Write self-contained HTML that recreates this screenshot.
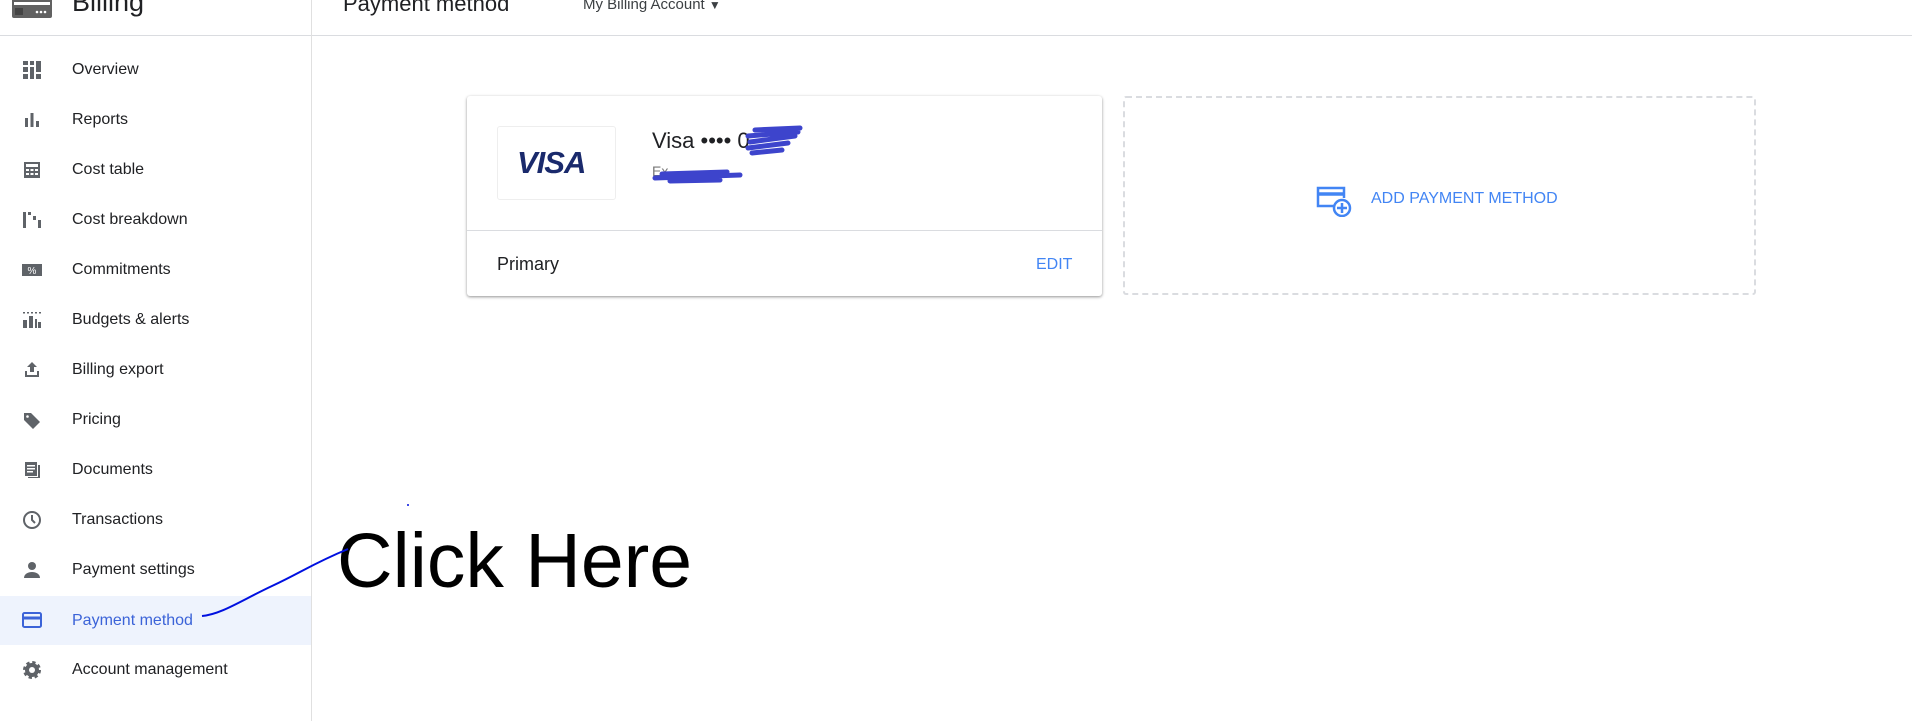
<!DOCTYPE html>
<html><head><meta charset="utf-8"><style>
*{margin:0;padding:0;box-sizing:border-box}
body{width:1912px;height:721px;overflow:hidden;background:#fff;font-family:"Liberation Sans",Arial,sans-serif;color:#202124;position:relative}
.abs{position:absolute}
.hdr{left:0;top:0;width:1912px;height:36px;border-bottom:1px solid #dadce0}
.vl{left:311px;top:0;width:1px;height:721px;background:#e0e0e0}
.nav{left:0;width:311px;height:50px;display:flex;align-items:center}
.nav .ic{position:absolute;left:22px;top:15px;width:20px;height:20px}
.nav span{position:absolute;left:72px;font-size:16px;color:#202124}
.act{background:#eef3fd}
.act span{color:#3b63d8!important}
</style></head><body>
<div class="abs hdr"></div>
<div class="abs vl"></div>
<svg class="abs" style="left:12px;top:-2px" width="40" height="22"><rect x="0" y="0" width="40" height="20" rx="2" fill="#616161"/><rect x="2" y="4" width="36" height="3" fill="#fff"/><rect x="3" y="10" width="8" height="7" fill="#444"/><circle cx="25" cy="14" r="1.3" fill="#fff"/><circle cx="29" cy="14" r="1.3" fill="#fff"/><circle cx="33" cy="14" r="1.3" fill="#fff"/></svg>
<div class="abs" style="left:72px;top:-13px;font-size:27px;color:#202124">Billing</div>
<div class="abs" style="left:343px;top:-9px;font-size:22px;color:#202124">Payment method</div>
<div class="abs" style="left:583px;top:-4px;font-size:15px;color:#3c4043">My Billing Account <span style="font-size:12px">▼</span></div>

<div class="abs nav" style="top:45px"><svg class="ic" viewBox="0 0 20 20" fill="#5f6368"><rect x="1" y="1" width="5" height="4"/><rect x="1" y="7" width="5" height="5"/><rect x="1" y="14" width="5" height="5"/><rect x="8" y="1" width="4" height="4"/><rect x="8" y="7" width="4" height="12"/><rect x="14" y="1" width="5" height="11"/><rect x="14" y="14" width="5" height="5"/></svg><span>Overview</span></div>
<div class="abs nav" style="top:95px"><svg class="ic" viewBox="0 0 20 20" fill="#5f6368"><rect x="3" y="8" width="3" height="9"/><rect x="8.5" y="3" width="3" height="14"/><rect x="14" y="11" width="3" height="6"/></svg><span>Reports</span></div>
<div class="abs nav" style="top:145px"><svg class="ic" viewBox="0 0 20 20"><rect x="2" y="2" width="16" height="16" fill="#5f6368"/><rect x="4" y="4" width="12" height="3" fill="#fff"/><g fill="#fff"><rect x="4" y="9" width="3" height="2"/><rect x="8.5" y="9" width="3" height="2"/><rect x="13" y="9" width="3" height="2"/><rect x="4" y="13" width="3" height="2"/><rect x="8.5" y="13" width="3" height="2"/><rect x="13" y="13" width="3" height="2"/></g></svg><span>Cost table</span></div>
<div class="abs nav" style="top:195px"><svg class="ic" viewBox="0 0 20 20" fill="#5f6368"><rect x="1" y="2" width="3" height="16"/><rect x="6" y="2" width="3" height="3"/><rect x="11" y="6" width="3" height="4"/><rect x="16" y="10" width="3" height="8"/></svg><span>Cost breakdown</span></div>
<div class="abs nav" style="top:245px"><svg class="ic" viewBox="0 0 20 20"><rect x="0" y="4" width="20" height="12" fill="#5f6368"/><text x="10" y="14" font-size="10" fill="#fff" text-anchor="middle" font-family="Liberation Sans">%</text></svg><span>Commitments</span></div>
<div class="abs nav" style="top:295px"><svg class="ic" viewBox="0 0 20 20" fill="#5f6368"><g><rect x="1" y="2" width="2" height="1.5"/><rect x="5" y="2" width="2" height="1.5"/><rect x="9" y="2" width="2" height="1.5"/><rect x="13" y="2" width="2" height="1.5"/><rect x="17" y="2" width="2" height="1.5"/></g><rect x="1" y="10" width="4" height="8"/><rect x="7" y="6" width="4" height="12"/><rect x="13" y="9" width="2" height="9"/><rect x="16" y="12" width="3" height="6"/></svg><span>Budgets &amp; alerts</span></div>
<div class="abs nav" style="top:345px"><svg class="ic" viewBox="0 0 20 20" fill="#5f6368"><path d="M10 2l5 5h-3v5H8V7H5z"/><path d="M3 11h2v4h10v-4h2v6H3z"/></svg><span>Billing export</span></div>
<div class="abs nav" style="top:395px"><svg class="ic" viewBox="0 0 20 20" fill="#5f6368"><path d="M2 3h7l9 9-7 7-9-9z"/><circle cx="5.5" cy="6.5" r="1.3" fill="#fff"/></svg><span>Pricing</span></div>
<div class="abs nav" style="top:445px"><svg class="ic" viewBox="0 0 20 20" fill="#5f6368"><path d="M3 2h12v14H3z"/><path d="M16 5h2v13H6v-1h10z"/><g fill="#fff"><rect x="5" y="5" width="8" height="1.5"/><rect x="5" y="8" width="8" height="1.5"/><rect x="5" y="11" width="6" height="1.5"/></g></svg><span>Documents</span></div>
<div class="abs nav" style="top:495px"><svg class="ic" viewBox="0 0 20 20" fill="none" stroke="#5f6368" stroke-width="2"><circle cx="10" cy="10" r="8"/><path d="M10 5v5l3 3"/></svg><span>Transactions</span></div>
<div class="abs nav" style="top:545px"><svg class="ic" viewBox="0 0 20 20" fill="#5f6368"><circle cx="10" cy="6" r="4"/><path d="M2 18c0-4 4-6 8-6s8 2 8 6z"/></svg><span>Payment settings</span></div>
<div class="abs nav act" style="top:596px;height:49px"><svg class="ic" style="top:14px" viewBox="0 0 20 20" fill="none" stroke="#3b63d8" stroke-width="2"><rect x="1" y="3" width="18" height="14" rx="1.5"/><path d="M1 8h18" stroke-width="3"/></svg><span>Payment method</span></div>
<div class="abs nav" style="top:645px"><svg class="ic" viewBox="0 0 20 20"><circle cx="10" cy="10" r="7" fill="#5f6368" stroke="#5f6368" stroke-width="4" stroke-dasharray="3 2.5"/><circle cx="10" cy="10" r="3" fill="#fff"/></svg><span>Account management</span></div>

<!-- card -->
<div class="abs" style="left:467px;top:96px;width:635px;height:200px;background:#fff;border-radius:3px;box-shadow:0 1px 3px rgba(0,0,0,.3),0 1px 2px rgba(0,0,0,.15)"></div>
<div class="abs" style="left:467px;top:230px;width:635px;height:1px;background:#dadce0"></div>
<div class="abs" style="left:497px;top:126px;width:119px;height:74px;border:1px solid #eee;border-radius:3px"></div>
<div class="abs" style="left:517px;top:145px;font-size:31px;font-weight:bold;font-style:italic;color:#1a2a6c;letter-spacing:-1px">VISA</div>
<div class="abs" style="left:652px;top:128px;font-size:22px;color:#202124">Visa •••• 0</div>
<div class="abs" style="left:652px;top:163px;font-size:14px;color:#777">Ex</div>
<svg class="abs" style="left:650px;top:120px" width="170" height="70"><g stroke="#3d44cc" stroke-linecap="round" fill="none"><path d="M105 10l45-2M98 16l50-4M100 22l45-6M98 28l40-5M102 33l30-3" stroke-width="5"/><path d="M12 54l65-2M5 58l85-3M20 61l50-1" stroke-width="5"/></g></svg>
<div class="abs" style="left:497px;top:254px;font-size:18px;color:#202124">Primary</div>
<div class="abs" style="left:1036px;top:256px;font-size:16px;color:#4285f4">EDIT</div>

<!-- add payment -->
<div class="abs" style="left:1123px;top:96px;width:633px;height:199px;border:2px dashed #dadce0;border-radius:3px"></div>
<svg class="abs" style="left:1315px;top:185px" width="38" height="32" viewBox="0 0 38 32" fill="none" stroke="#4285f4" stroke-width="2.5"><path d="M20 21H3V3h26v10"/><path d="M3 9h26" stroke-width="3.5"/><circle cx="27" cy="23" r="8"/><path d="M27 18v10M22 23h10"/></svg>
<div class="abs" style="left:1371px;top:190px;font-size:16px;color:#4285f4">ADD PAYMENT METHOD</div>

<!-- annotation -->
<div class="abs" style="left:337px;top:523px;font-size:77px;color:#000;line-height:1">Click Here</div>
<svg class="abs" style="left:0;top:0" width="420" height="721"><path d="M202 616c20-2 40-16 70-30s40-22 76-37" stroke="#0010e0" stroke-width="2" fill="none"/><circle cx="408" cy="505" r="1" fill="#0010e0"/></svg>
</body></html>
